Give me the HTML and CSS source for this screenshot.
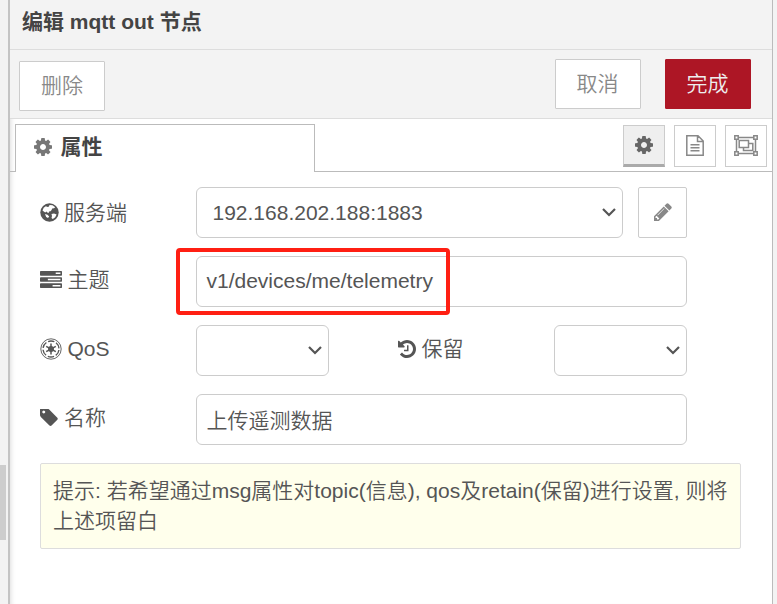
FILE: index.html
```html
<!DOCTYPE html>
<html lang="zh-CN">
<head>
<meta charset="utf-8">
<title>mqtt out</title>
<link rel="stylesheet" href="styles.css">
</head>
<body>
<svg class="defs" aria-hidden="true">
<symbol id="cog" viewBox="128 128 1536 1536"><path d="M1152 896q0-106-75-181t-181-75-181 75-75 181 75 181 181 75 181-75 75-181zm512-109v222q0 12-8 23t-20 13l-185 28q-19 54-39 91 35 50 107 138 10 12 10 25t-9 23q-27 37-99 108t-94 71q-12 0-26-9l-138-108q-44 23-91 38-16 136-29 186-7 28-36 28h-222q-14 0-24.500-8.500t-11.500-21.500l-28-184q-49-16-90-37l-141 107q-10 9-25 9-14 0-25-11-126-114-165-168-7-10-7-23 0-12 8-23 15-21 51-66.500t54-70.500q-27-50-41-99l-183-27q-13-2-21-12.500t-8-23.500v-222q0-12 8-23t19-13l186-28q14-46 39-92-40-57-107-138-10-12-10-24 0-10 9-23 26-36 98.500-107.500t94.500-71.500q13 0 26 10l138 107q44-23 91-38 16-136 29-186 7-28 36-28h222q14 0 24.500 8.500t11.500 21.500l28 184q49 16 90 37l142-107q9-9 24-9 13 0 25 10 129 119 165 170 7 8 7 22 0 12-8 23-15 21-51 66.500t-54 70.500q26 50 41 98l183 28q13 2 21 12.500t8 23.500z"/></symbol>
</svg>
<div class="app">
  <div class="edge"><div class="thumb"></div></div>
  <main class="tray">
    <header class="title">编辑 mqtt out 节点</header>
    <div class="toolbar">
      <button class="btn delete">删除</button>
      <button class="btn">取消</button>
      <button class="btn primary">完成</button>
    </div>
    <nav class="tabs">
      <div class="tab"><svg class="i18"><use href="#cog"/></svg><span>属性</span></div>
      <div class="tools">
        <button class="tool active"><svg class="i18"><use href="#cog"/></svg></button>
        <button class="tool"><svg class="outline" width="18" height="21" viewBox="0 0 18 21"><path d="M.8.8H12L17.2 6V20.200H.8zM11.500.8V6.500H17.200M4.500 9.700H13.500M4.500 12.700H13.500M4.500 15.700H13.500"/></svg></button>
        <button class="tool"><svg class="outline" width="24" height="21" viewBox="0 0 24 21"><path d="M4.200 2.500H19.800M4.200 18.500H19.800M2.500 4.200V16.800M21.500 4.200V16.800M.8.8H4.200V4.200H.8zM19.800.8H23.200V4.200H19.800zM.8 16.800H4.200V20.200H.8zM19.800 16.800H23.200V20.200H19.800zM5.200 5.500H14.500V12.500H5.200zM14.500 8.500H18.800V15.500H9.500V12.500"/></svg></button>
      </div>
    </nav>
    <form class="form">
      <div class="row server">
        <label><svg width="19" height="19" viewBox="0 0 19 19"><circle cx="9.500" cy="9.500" r="9.200"/><path fill="#fff" d="M9.500 2 12.500 2.300 15.200 4.200 14 5.200 12.200 5.400 11.600 6.900 10.600 8.200 9 8.600 8.700 10 7.300 9.500 6.600 8.500 5.200 9.500 3.800 8.500 2.500 7.500 3.700 4.800 5.800 3.200 7.700 4 9 3.600zM11.500 11 14 10.400 16.600 11.500 15.200 14.300 12.800 16 11.500 15 12 13zM5 11 7.500 11.800 9.200 13.400 8 15 6.200 14z"/></svg><span>服务端</span></label>
        <div class="field select wide"><span>192.168.202.188:1883</span><svg class="chev" viewBox="0 0 14 9"><path d="M1 1 7 7 13 1"/></svg></div>
        <button type="button" class="edit"><svg class="i18" viewBox="128 128 1536 1536"><path d="M491 1536l91-91-235-235-91 91v107h128v128h107zm523-928q0-22-22-22-10 0-17 7l-542 542q-7 7-7 17 0 22 22 22 10 0 17-7l542-542q7-7 7-17zm-54-192l416 416-832 832h-416v-416zm683 96q0 53-37 90l-166 166-416-416 166-165q36-38 90-38 53 0 91 38l235 234q37 39 37 91z"/></svg></button>
      </div>
      <div class="row topic">
        <label><svg width="22" height="17" viewBox="0 128 1792 1408" preserveAspectRatio="none"><path d="M1024 1408h640v-128h-640v128zm-384-512h1024v-128h-1024v128zm640-512h384v-128h-384v128zm512 832v256q0 26-19 45t-45 19h-1664q-26 0-45-19t-19-45v-256q0-26 19-45t45-19h1664q26 0 45 19t19 45zm0-512v256q0 26-19 45t-45 19h-1664q-26 0-45-19t-19-45v-256q0-26 19-45t45-19h1664q26 0 45 19t19 45zm0-512v256q0 26-19 45t-45 19h-1664q-26 0-45-19t-19-45v-256q0-26 19-45t45-19h1664q26 0 45 19t19 45z"/></svg><span>主题</span></label>
        <div class="field full"><span>v1/devices/me/telemetry</span></div>
        <div class="highlight"></div>
      </div>
      <div class="row qos">
        <label><svg width="22" height="22" viewBox="0 0 22 22"><g fill="none" stroke="currentColor"><circle cx="11" cy="11" r="10.200" stroke-width=".9"/><circle cx="11" cy="11" r="8" stroke-width="1.400" stroke-dasharray="6.400 1.978" stroke-dashoffset="-1"/><path stroke-width="1.500" d="M11 5.500V16.500M6.200 8.300 15.800 13.700M6.200 13.700 15.800 8.300"/></g><circle cx="11" cy="11" r="3"/></svg><span>QoS</span></label>
        <div class="field select small"><svg class="chev" viewBox="0 0 14 9"><path d="M1 1 7 7 13 1"/></svg></div>
        <label class="retain"><svg class="i18" viewBox="128 128 1536 1536"><path d="M1664 896q0 156-61 298t-164 245-245 164-298 61q-172 0-327-72.500t-264-204.500q-7-10-6.500-22.500t8.500-20.500l137-138q10-9 25-9 16 2 23 12 73 95 179 147t225 52q104 0 198.500-40.500t163.500-109.500 109.500-163.500 40.500-198.500-40.500-198.500-109.500-163.500-163.500-109.500-198.500-40.500q-98 0-188 35.500t-160 101.500l137 138q31 30 14 69-17 40-59 40h-448q-26 0-45-19t-19-45v-448q0-42 40-59 39-17 69 14l130 129q107-101 244.500-156.500t284.500-55.500q156 0 298 61t245 164 164 245 61 298zm-640-288v448q0 14-9 23t-23 9h-320q-14 0-23-9t-9-23v-64q0-14 9-23t23-9h224v-352q0-14 9-23t23-9h64q14 0 23 9t9 23z"/></svg><span>保留</span></label>
        <div class="field select small"><svg class="chev" viewBox="0 0 14 9"><path d="M1 1 7 7 13 1"/></svg></div>
      </div>
      <div class="row name">
        <label><svg class="i18" viewBox="128 192 1536 1536"><path d="M576 448q0-53-37.500-90.500t-90.500-37.500-90.500 37.500-37.500 90.500 37.500 90.500 90.500 37.500 90.500-37.500 37.500-90.500zm1067 576q0 53-37 90l-491 492q-39 37-91 37-53 0-90-37l-715-716q-38-37-64.500-101t-26.500-117v-416q0-52 38-90t90-38h416q53 0 117 26.500t102 64.500l715 714q37 39 37 91z"/></svg><span>名称</span></label>
        <div class="field full"><span>上传遥测数据</span></div>
      </div>
      <div class="tips">提示: 若希望通过msg属性对topic(信息), qos及retain(保留)进行设置, 则将上述项留白</div>
    </form>
  </main>
  <div class="edge-right"></div>
</div>
</body>
</html>
```
FILE: styles.css
```css
* { box-sizing: border-box; }
body { margin: 0; overflow: hidden; font: 350 21px/30px "Liberation Sans", "Noto Sans CJK SC", sans-serif; color: #555; }
button { font: inherit; padding: 0; margin: 0; }
svg { display: block; flex: none; fill: currentColor; }
.defs { position: absolute; width: 0; height: 0; }
.i18 { width: 18px; height: 18px; }
.outline { fill: none; stroke: currentColor; stroke-width: 1.5; }
.app { display: flex; height: 604px; background: #f3f3f3; }
.edge { width: 10px; border-right: 2px solid #c4c4c4; padding-top: 465px; }
.thumb { width: 6px; height: 75px; background: #cdcdcd; }
.tray { width: 763px; background: #fff; border-right: 1px solid #bbb; box-shadow: inset 5px 0 5px -4px #ddd; }
.edge-right { flex: 1; }
.title { height: 50px; padding: 7px 0 0 12px; font-weight: 700; color: #444; background: #f3f3f3; border-bottom: 1px solid #ddd; }
.toolbar { height: 69px; display: flex; align-items: flex-start; gap: 24px; padding: 9px 21px 0 9px; background: #f3f3f3; border-bottom: 1px solid #ddd; }
.btn { width: 86px; height: 50px; border: 1px solid #ccc; background: #fff; color: #888; border-radius: 1px; padding-right: 1px; }
.delete { margin: 2px auto 0 0; padding-right: 0; }
.primary { background: #ad1625; border-color: #ad1625; color: #eee; }
.tabs { height: 53px; display: flex; align-items: flex-end; justify-content: space-between; padding: 0 5px; background: linear-gradient(#bbb, #bbb) bottom / 100% 1px no-repeat; }
.tab { width: 300px; height: 48px; display: flex; align-items: center; gap: 9px; padding: 0 0 4px 17.5px; border: 1px solid #bbb; border-bottom: 0; background: #fff; font-weight: 700; color: #444; }
.tab svg { color: #777; }
.tools { display: flex; gap: 9px; padding-bottom: 5px; }
.tool { width: 42px; height: 42px; display: flex; align-items: center; justify-content: center; padding-bottom: 1px; border: 1px solid #ccc; background: #fff; color: #888; }
.active { background: #efefef; border-bottom: 3px solid #aaa; color: #666; padding-bottom: 0; }
.form { padding: 15px 31px 0 30px; }
.row { display: flex; height: 51px; margin-bottom: 18px; position: relative; }
label { width: 156px; display: flex; align-items: center; gap: 5.5px; padding-bottom: 4px; }
.server label { padding-bottom: 1px; gap: 5px; }
.server label span { padding-top: 1px; }
.topic label { padding-bottom: 5px; }
.topic label span { padding-top: 1px; }
.name label { gap: 6px; }
.field { display: flex; align-items: center; border: 1px solid #ccc; border-radius: 6px; padding-left: 10px; height: 51px; }
.field span { margin-left: -.5px; }
.full { width: 491px; }
.topic .field { padding-bottom: 2px; }
.name .field { padding-top: 2px; }
.wide { width: 427px; padding-left: 16px; }
.small { width: 133px; }
.select { justify-content: space-between; padding-right: 6px; }
.chev { width: 14px; height: 9px; fill: none; stroke: #555; stroke-width: 2.2; margin-left: auto; }
.edit { width: 49px; height: 51px; margin-left: 15px; padding-bottom: 2px; display: flex; align-items: center; justify-content: center; border: 1px solid #ccc; border-radius: 2px; background: #fff; color: #888; }
.retain { margin-left: 69px; }
.highlight { position: absolute; left: 136px; top: -8px; width: 274px; height: 67px; border: 4px solid #ff1f13; border-radius: 4px; }
.tips { height: 86px; border: 1px solid #ddd; border-radius: 2px; background: #ffffec; padding: 12px 10px 0 12px; }
```
